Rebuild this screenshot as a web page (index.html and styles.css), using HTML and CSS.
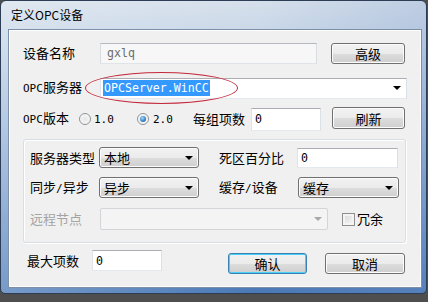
FILE: index.html
```html
<!DOCTYPE html>
<html>
<head>
<meta charset="utf-8">
<link rel="stylesheet" href="styles.css">
</head>
<body>
<div class="window">
  <div class="titlebar">定义OPC设备</div>
  <div class="client">
    <div class="row r1">
      <span class="label w77">设备名称</span>
      <div class="edit disabled e-name"><span class="mono">gxlq</span></div>
      <button class="btn b-adv">高级</button>
    </div>
    <div class="row r2">
      <span class="label w77"><span class="lat">OPC</span>服务器</span>
      <div class="combo-edit"><span class="sel mono">OPCServer.WinCC</span><span class="arrow"></span></div>
    </div>
    <div class="row r3">
      <span class="label w56"><span class="lat">OPC</span>版本</span>
      <span class="radio"></span>
      <span class="lat rlabel">1.0</span>
      <span class="radio checked r2nd"></span>
      <span class="lat rlabel r2lab">2.0</span>
      <span class="label perg">每组项数</span>
      <div class="edit e-per"><span class="mono">0</span></div>
      <button class="btn b-ref">刷新</button>
    </div>
    <div class="group">
      <div class="grow g1">
        <span class="label w69">服务器类型</span>
        <div class="combo w100"><span>本地</span><span class="arrow"></span></div>
        <span class="label w78 gap20">死区百分比</span>
        <div class="edit e-dead"><span class="mono">0</span></div>
      </div>
      <div class="grow g2">
        <span class="label w69">同步<span class="lat">/</span>异步</span>
        <div class="combo w100"><span>异步</span><span class="arrow"></span></div>
        <span class="label w79 gap20">缓存<span class="lat">/</span>设备</span>
        <div class="combo w101"><span>缓存</span><span class="arrow"></span></div>
      </div>
      <div class="grow g3">
        <span class="label w70 dim">远程节点</span>
        <div class="combo-dis"><span class="arrow grey"></span></div>
        <span class="check"></span>
        <span class="label chk-lab">冗余</span>
      </div>
    </div>
    <div class="row r7">
      <span class="label w65">最大项数</span>
      <div class="edit e-max"><span class="mono">0</span></div>
      <button class="btn default b-ok">确认</button>
      <button class="btn b-cancel">取消</button>
    </div>
  </div>
  <div class="annot"></div>
</div>
</body>
</html>
```

FILE: styles.css
```css
* { box-sizing: border-box; }
html, body { margin: 0; padding: 0; }
body {
  width: 428px;
  height: 302px;
  background: #4e4e4e;
  overflow: hidden;
  font-family: "Noto Sans CJK SC", "Noto Sans", sans-serif;
  font-size: 13px;
  color: #000;
}
.window {
  position: relative;
  width: 427px;
  height: 294px;
  border: 1px solid #2c3d55;
  border-radius: 6px 6px 5px 5px;
  padding: 0 4px 5px 7px;
  background:
    linear-gradient(to right, rgba(255,255,255,0.25), rgba(255,255,255,0) 60%, rgba(120,150,200,0.25)),
    linear-gradient(to bottom, #d6e0eb 0%, #c7d6e8 12%, #97b4d8 45%, #6a92c6 75%, #4a79b6 100%);
}
.titlebar {
  height: 28px;
  padding: 5px 0 0 3px;
  font-size: 12px;
  line-height: 18px;
  color: #000;
}
.client {
  height: 259px;
  border: 1px solid #7b8fa8;
  box-shadow: inset 0 0 0 1px #ffffff;
  background: #f0f0f0;
  padding-top: 12px;
}
.row {
  display: flex;
  align-items: center;
  height: 22px;
  padding-left: 14px;
}
.r2 { margin-top: 13px; }
.r3 { margin-top: 9px; }
.r7 { margin-top: 7px; height: 24px; align-items: flex-start; padding-left: 18px; }
.label { white-space: nowrap; line-height: 18px; }
.lat { font-family: "DejaVu Sans Mono", "Liberation Mono", monospace; font-size: 11px; }
.mono { font-family: "DejaVu Sans Mono", "Liberation Mono", monospace; font-size: 11.6px; }
.dim { color: #a3a3a3; }
.w56 { width: 56px; }
.w65 { width: 65px; }
.w69 { width: 69px; }
.w70 { width: 70px; }
.w77 { width: 77px; }
.w78 { width: 78px; }
.w79 { width: 79px; }
.gap20 { margin-left: 20px; }

.edit {
  height: 21px;
  border: 1px solid;
  border-color: #abadb3 #dbdfe6 #e3e9ef #e2e3ea;
  background: #fff;
  padding-left: 3px;
  display: flex;
  align-items: center;
}
.edit.disabled { background: #f7f7f7; color: #6d6d6d; border-color: #b5b9bd #d9dce0 #e0e3e7 #d9dce0; }
.e-name { width: 217px; padding-left: 6px; }
.e-per { width: 70px; height: 23px; margin-left: 0; }
.e-dead { width: 101px; height: 20px; }
.e-max { width: 70px; height: 21px; }

.btn {
  font-family: "Noto Sans CJK SC", sans-serif;
  font-size: 13px;
  color: #000;
  height: 21px;
  padding: 0;
  border: 1px solid #707070;
  border-radius: 3px;
  background: linear-gradient(to bottom, #f2f2f2 0%, #ebebeb 50%, #dddddd 51%, #cfcfcf 100%);
  box-shadow: inset 0 0 0 1px #fcfcfc;
  line-height: 17px;
}
.btn.default {
  border-color: #3c7fb1;
  box-shadow: inset 0 0 0 1px #48d0f8;
}
.b-adv { width: 74px; margin-left: 14px; }
.b-ref { width: 73px; height: 22px; margin-left: 11px; margin-top: -2px; }
.b-ok { width: 79px; margin-left: 66px; margin-top: 3px; }
.b-cancel { width: 80px; margin-left: 18px; margin-top: 3px; }
.r7 .label { line-height: 21px; }

.combo-edit {
  position: relative;
  width: 307px;
  height: 21px;
  border: 1px solid;
  border-color: #abadb3 #dbdfe6 #e3e9ef #e2e3ea;
  background: #fff;
  padding-left: 2px;
  display: flex;
  align-items: center;
}
.sel {
  background: #3399ff;
  color: #fff;
  height: 16px;
  line-height: 16px;
  padding: 0 1px;
}
.arrow {
  position: absolute;
  right: 5px;
  top: 50%;
  margin-top: -2px;
  width: 0;
  height: 0;
  border-left: 4px solid transparent;
  border-right: 4px solid transparent;
  border-top: 4px solid #000;
}
.arrow.grey { border-top-color: #a8a8a8; }

.combo {
  position: relative;
  height: 21px;
  border: 1px solid #707070;
  border-radius: 3px;
  background: linear-gradient(to bottom, #f2f2f2 0%, #ebebeb 50%, #dddddd 51%, #cfcfcf 100%);
  box-shadow: inset 0 0 0 1px #fcfcfc;
  padding-left: 4px;
  display: flex;
  align-items: center;
  line-height: 18px;
}
.w100 { width: 100px; }
.w101 { width: 101px; }
.combo-dis {
  position: relative;
  width: 228px;
  height: 22px;
  border: 1px solid #d3d5d9;
  border-radius: 2px;
  background: #f4f4f4;
}

.radio {
  width: 12px;
  height: 12px;
  border-radius: 50%;
  border: 1px solid #8e9297;
  background: radial-gradient(circle at 50% 50%, #e6e6e6 0%, #f7f7f7 70%);
  margin-right: 3px;
  position: relative;
}
.radio.checked::after {
  content: "";
  position: absolute;
  left: 2px;
  top: 2px;
  width: 6px;
  height: 6px;
  border-radius: 50%;
  background: radial-gradient(circle at 40% 35%, #a9dcfb 0%, #3a86c8 55%, #14447f 100%);
}
.rlabel { width: 21px; }
.r2nd { margin-left: 22px; margin-right: 4px; }
.r2lab { width: 20px; }
.perg { margin-left: 20px; width: 58px; }

.group {
  margin-top: 9px;
  margin-left: 14px;
  width: 383px;
  height: 104px;
  border: 1px solid #d5dfe5;
  border-radius: 3px;
  box-shadow: inset 1px 1px 0 #ffffff, 1px 1px 0 #ffffff;
  padding-top: 7px;
  padding-left: 6px;
}
.grow {
  display: flex;
  align-items: center;
  height: 21px;
}
.g2 { margin-top: 9px; }
.g3 { margin-top: 10px; height: 22px; }

.check {
  width: 13px;
  height: 13px;
  margin-left: 14px;
  border: 1px solid #8f8f8f;
  background: linear-gradient(135deg, #d8d8d8, #f8f8f8);
  box-shadow: inset 0 0 0 2px #f4f4f4;
}
.chk-lab { margin-left: 2px; }

.annot {
  position: absolute;
  left: 84px;
  top: 71px;
  width: 153px;
  height: 32px;
  border: 1.5px solid #c42a3c;
  border-radius: 50%;
  pointer-events: none;
}
```
